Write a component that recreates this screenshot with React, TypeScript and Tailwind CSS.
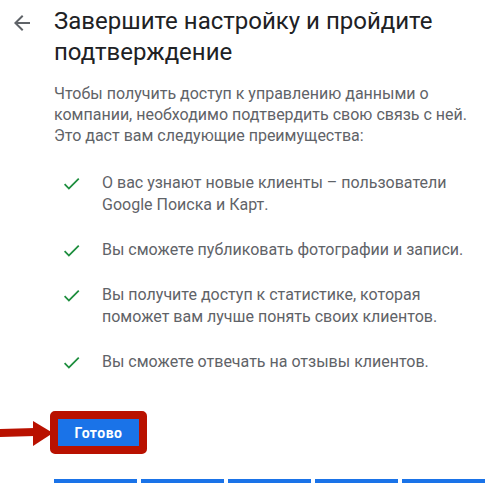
import React from 'react';

const benefits = [
  'О вас узнают новые клиенты – пользователи Google Поиска и Карт.',
  'Вы сможете публиковать фотографии и записи.',
  'Вы получите доступ к статистике, которая поможет вам лучше понять своих клиентов.',
  'Вы сможете отвечать на отзывы клиентов.',
];

const CheckIcon: React.FC = () => (
  <svg viewBox="0 0 24 24" className="w-[21px] h-[21px] shrink-0" fill="#1e8e3e">
    <path d="M9 16.17L4.83 12l-1.42 1.41L9 19 21 7l-1.41-1.41z" />
  </svg>
);

const App: React.FC = () => {
  return (
    <div className="relative w-[487px] h-[484px] bg-white overflow-hidden font-['Roboto',sans-serif]">
      <div className="flex">
        {/* Back button */}
        <div className="w-[54px] shrink-0 pt-[11px] pl-[10px]">
          <svg viewBox="0 0 24 24" className="w-[24px] h-[24px]" fill="#5f6368">
            <path d="M20 11H7.83l5.59-5.59L12 4l-8 8 8 8 1.41-1.41L7.83 13H20v-2z" />
          </svg>
        </div>

        <div className="flex-1 pr-[2px]">
          <h1 className="pt-[6px] text-[24px] leading-[31px] text-[#202124] font-['Roboto',sans-serif]">
            Завершите настройку и пройдите подтверждение
          </h1>

          <p className="mt-[15px] text-[16px] leading-[21px] text-[#5f6368]">
            Чтобы получить доступ к управлению данными о компании, необходимо подтвердить свою связь с ней. Это даст вам следующие преимущества:
          </p>

          <ul className="mt-[26px] pl-[7px] flex flex-col gap-[23px]">
            {benefits.map((text) => (
              <li key={text} className="flex items-start gap-[20px]">
                <div className="pt-[1px]">
                  <CheckIcon />
                </div>
                <span className="text-[16px] leading-[22px] text-[#5f6368]">{text}</span>
              </li>
            ))}
          </ul>

          {/* Done button with red highlight */}
          <div className="relative mt-[38px] ml-[-4px] w-[97px] h-[43px] rounded-[5px] border-[8px] border-[#b91100]">
            <button className="w-full h-full bg-[#1a73e8] text-white text-[14px] font-bold tracking-[0.5px] font-['Roboto',sans-serif] leading-none">
              Готово
            </button>
          </div>

          {/* Progress */}
          <div className="mt-[25px] flex gap-[4px]">
            <div className="w-[83px] h-[4px] bg-[#1a73e8]" />
            <div className="w-[83px] h-[4px] bg-[#1a73e8]" />
            <div className="w-[83px] h-[4px] bg-[#1a73e8]" />
            <div className="w-[83px] h-[4px] bg-[#1a73e8]" />
            <div className="w-[83px] h-[4px] bg-[#1a73e8]" />
          </div>
        </div>
      </div>

      {/* Annotation arrow */}
      <svg className="absolute left-0 top-[419px]" width="54" height="28" viewBox="0 0 54 28" fill="#b91100">
        <polygon points="0,10 35,9 35,17 0,18" />
        <polygon points="33,2 53,14 33,27" />
      </svg>
    </div>
  );
};

export default App;
